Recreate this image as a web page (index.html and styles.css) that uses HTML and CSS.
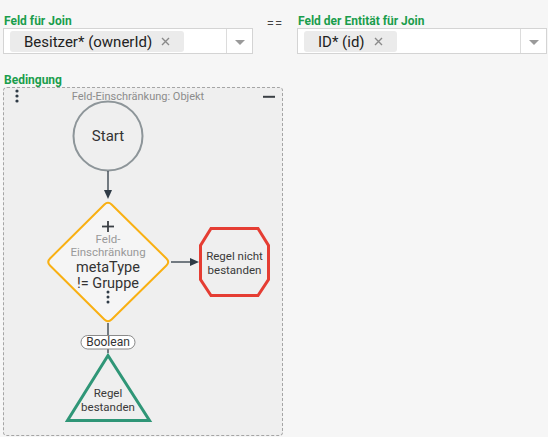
FILE: index.html
```html
<!DOCTYPE html>
<html lang="de">
<head>
  <meta charset="UTF-8" />
  <title>Join Bedingung</title>
  <link rel="stylesheet" href="styles.css">
</head>
<body>
  <div class="page">
    <div class="join-row">
      <div class="field">
        <label class="field-label">Feld für Join</label>
        <div class="select">
          <div class="select-values">
            <span class="chip">Besitzer* (ownerId)
              <svg class="chip-x" width="9" height="9" viewBox="0 0 9 9"><path d="M1 1 L8 8 M8 1 L1 8" /></svg>
            </span>
          </div>
          <div class="select-toggle"><span class="caret"></span></div>
        </div>
      </div>
      <div class="eq">==</div>
      <div class="field">
        <label class="field-label">Feld der Entität für Join</label>
        <div class="select">
          <div class="select-values">
            <span class="chip">ID* (id)
              <svg class="chip-x" width="9" height="9" viewBox="0 0 9 9"><path d="M1 1 L8 8 M8 1 L1 8" /></svg>
            </span>
          </div>
          <div class="select-toggle"><span class="caret"></span></div>
        </div>
      </div>
    </div>

    <label class="field-label cond-label">Bedingung</label>
    <div class="condition-box">
      <svg class="diagram" width="278" height="347" viewBox="4 88 278 347">
        <!-- header -->
        <circle cx="17" cy="91" r="1.6" class="ink-fill" />
        <circle cx="17" cy="96" r="1.6" class="ink-fill" />
        <circle cx="17" cy="101" r="1.6" class="ink-fill" />
        <text x="138" y="99.5" class="box-title">Feld-Einschränkung: Objekt</text>
        <line x1="263" y1="96.8" x2="275" y2="96.8" class="minus" />

        <!-- start -->
        <circle cx="108" cy="136" r="34.5" class="start-node" />
        <text x="108" y="141" class="node-text big">Start</text>
        <line x1="108" y1="171" x2="108" y2="191" class="edge" />
        <polygon points="104,190 112,190 108,199" class="ink-fill" />

        <!-- constraint diamond -->
        <path class="diamond" d="M111.6 204.5 L166.4 258.5 Q170 262 166.4 265.5 L111.6 319.5 Q108 323 104.4 319.5 L50 265.5 Q46.5 262 50 258.5 L104.4 204.5 Q108 201 111.6 204.5 Z" />
        <line x1="102" y1="226.5" x2="114" y2="226.5" class="plus" />
        <line x1="108" y1="221" x2="108" y2="232" class="plus" />
        <text x="108" y="243" class="node-sub">Feld-</text>
        <text x="108" y="255.5" class="node-sub">Einschränkung</text>
        <text x="108" y="272" class="node-text mid">metaType</text>
        <text x="108" y="288" class="node-text mid">!= Gruppe</text>
        <circle cx="108" cy="292" r="1.5" class="ink-fill" />
        <circle cx="108" cy="297" r="1.5" class="ink-fill" />
        <circle cx="108" cy="302" r="1.5" class="ink-fill" />

        <!-- failure -->
        <line x1="171" y1="262" x2="191" y2="262" class="edge" />
        <polygon points="190,258 190,266 199,262" class="ink-fill" />
        <polygon class="fail-node" points="211,228.5 258,228.5 268.5,245.5 268.5,279.5 258,295.5 211,295.5 200.5,279.5 200.5,245.5" />
        <text x="234.5" y="260" class="node-text small">Regel nicht</text>
        <text x="234.5" y="273.5" class="node-text small">bestanden</text>

        <!-- success -->
        <line x1="108" y1="323" x2="108" y2="353" class="edge" />
        <rect x="81" y="335.5" width="54" height="13.5" rx="6.75" class="pill" />
        <text x="108" y="346" class="node-text pill-text">Boolean</text>
        <polygon class="ok-node" points="108,355.5 67.5,420.5 149.5,420.5" />
        <text x="108" y="397" class="node-text small">Regel</text>
        <text x="108" y="410.5" class="node-text small">bestanden</text>
      </svg>
    </div>
  </div>
</body>
</html>
```

FILE: styles.css
```css
body {
  margin: 0;
  font-family: Roboto, "Liberation Sans", sans-serif;
  background: #f6f6f6;
  color: #333;
}
.page {
  padding: 14px 1px 0 3px;
}
.join-row {
  display: flex;
}
.field {
  width: 250px;
  display: flex;
  flex-direction: column;
}
.field-label {
  display: block;
  padding-left: 1px;
  font-size: 12px;
  line-height: 14px;
  font-weight: bold;
  color: #1a9d4c;
}
.eq {
  width: 44px;
  text-align: center;
  font-size: 13px;
  line-height: 1;
  padding-top: 3px;
  color: #444;
  letter-spacing: 1px;
}
.select {
  display: flex;
  height: 26px;
  box-sizing: border-box;
  border: 1px solid #d4d4d4;
  background: #fff;
}
.select-values {
  flex: 1;
  display: flex;
  align-items: center;
  padding: 1px 6px 0;
}
.chip {
  display: flex;
  align-items: center;
  height: 21px;
  padding: 0 14px;
  background: #ebebeb;
  border-radius: 3px;
  font-size: 15px;
  color: #222;
}
.chip-x {
  margin-left: 9px;
  stroke: #8a8a8a;
  stroke-width: 1.4;
}
.select-toggle {
  width: 25px;
  border-left: 1px solid #dcdcdc;
  display: flex;
  align-items: center;
  justify-content: center;
}
.caret {
  width: 0;
  height: 0;
  border-left: 5px solid transparent;
  border-right: 5px solid transparent;
  border-top: 5px solid #9a9a9a;
  margin-top: 2px;
}
.cond-label {
  margin-top: 19px;
}
.condition-box {
  width: 278px;
  height: 347px;
  border: 1px dashed #a5a5a5;
  border-radius: 4px;
  background: #efefef;
}
.diagram {
  display: block;
}
.diagram text {
  text-anchor: middle;
  font-family: Roboto, "Liberation Sans", sans-serif;
}
.ink-fill {
  fill: #2f3b46;
}
.box-title {
  font-size: 11px;
  fill: #8c8c8c;
}
.minus {
  stroke: #3a3f44;
  stroke-width: 2;
}
.start-node {
  fill: #efefef;
  stroke: #8d9599;
  stroke-width: 2;
}
.edge {
  stroke: #2f3b46;
  stroke-width: 1.3;
}
.diamond {
  fill: #f5f5f5;
  stroke: #f9b012;
  stroke-width: 2;
}
.plus {
  stroke: #3a3f44;
  stroke-width: 1.8;
}
.node-sub {
  font-size: 11.5px;
  fill: #999;
}
.node-text {
  fill: #333;
}
.node-text.big {
  font-size: 15px;
}
.node-text.mid {
  font-size: 14.5px;
}
.node-text.small {
  font-size: 11.5px;
  fill: #3a3a3a;
}
.fail-node {
  fill: #efefef;
  stroke: #e53d33;
  stroke-width: 3;
}
.pill {
  fill: #fff;
  stroke: #8a8a8a;
  stroke-width: 1;
}
.node-text.pill-text {
  font-size: 12px;
}
.ok-node {
  fill: #efefef;
  stroke: #2f9677;
  stroke-width: 3;
}
```
